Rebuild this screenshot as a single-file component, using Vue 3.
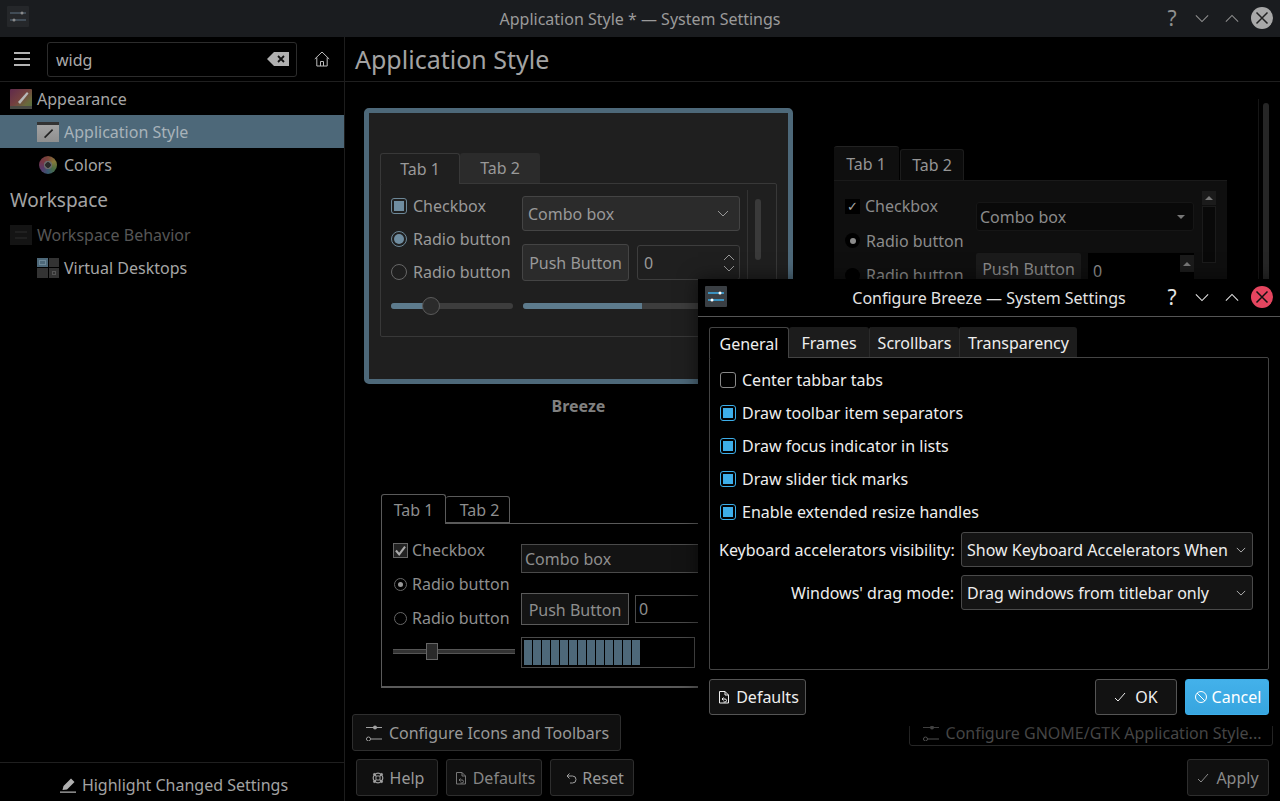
<script setup>
const checks = [
  { label: 'Center tabbar tabs', on: false },
  { label: 'Draw toolbar item separators', on: true },
  { label: 'Draw focus indicator in lists', on: true },
  { label: 'Draw slider tick marks', on: true },
  { label: 'Enable extended resize handles', on: true },
]
const chunks = Array.from({ length: 13 }, (_, i) => i)
const dialogTabs = ['General', 'Frames', 'Scrollbars', 'Transparency']
</script>

<template>
  <div class="app">
    <header class="titlebar">
      <svg class="app-icon dim-icon" viewBox="0 0 22 21"><rect width="22" height="21" rx="1" fill="#25272a"/><path d="M3 7h16M3 14h16" stroke="#4b5a65" stroke-width="1.5"/><circle cx="15" cy="7" r="1.5" fill="#8a8a8a"/><circle cx="7" cy="14" r="1.5" fill="#8a8a8a"/></svg>
      <div class="title">Application Style * — System Settings</div>
      <div class="win-btns">
        <span class="q">?</span>
        <svg class="chev" viewBox="0 0 16 10"><path d="M1 1.5l7 7 7-7" fill="none" stroke="currentColor" stroke-width="1.2"/></svg>
        <svg class="chev" viewBox="0 0 16 10"><path d="M1 8.5l7-7 7 7" fill="none" stroke="currentColor" stroke-width="1.2"/></svg>
        <span class="close-dot idle"><svg viewBox="0 0 22 22"><path d="M5.5 5.5l11 11M16.5 5.5l-11 11" stroke="#222" stroke-width="1.5"/></svg></span>
      </div>
    </header>

    <div class="body">
      <aside class="sidebar">
        <div class="side-head">
          <svg class="burger" viewBox="0 0 16 14"><path d="M0 1h16M0 7h16M0 13h16" stroke="#b4b4b4" stroke-width="2"/></svg>
          <div class="search">
            <span class="query">widg</span>
            <svg class="clear" viewBox="0 0 22 14"><path d="M7 0h15v14H7L0 7z" fill="#b0b0b0"/><path d="M11 4l6 6M17 4l-6 6" stroke="#111" stroke-width="1.8"/></svg>
          </div>
          <svg class="home" viewBox="0 0 16 16"><path d="M.8 8L8 1l7.2 7M2.8 6.5V15h10.4V6.5M6.5 15v-4.5h3V15" fill="none" stroke="#bdbdbd" stroke-width="1"/></svg>
        </div>
        <nav class="nav">
          <div class="row lvl1">
            <span class="ico ico-appearance"><svg viewBox="0 0 22 20"><path d="M8 13L17 3l1.500 1.500L10 15z" fill="#b8b8b8"/><path d="M0 17h22v3H0z" fill="#4a4a44"/></svg></span>Appearance
          </div>
          <div class="row lvl2 selected">
            <span class="ico ico-style"><svg viewBox="0 0 22 20"><path d="M7 15l8-8 1.200 1.200-8 8z" fill="#222"/></svg></span>Application Style
          </div>
          <div class="row lvl2">
            <span class="ico ico-colors"></span>Colors
          </div>
          <div class="heading">Workspace</div>
          <div class="row lvl1 disabled">
            <span class="ico ico-work"><svg viewBox="0 0 22 20"><path d="M5 7h12M5 13h12" stroke="#2c2c2c"/></svg></span>Workspace Behavior
          </div>
          <div class="row lvl2">
            <span class="ico ico-virtual"><i class="vd-a"></i><i></i><i></i><i class="vd-d"></i></span>Virtual Desktops
          </div>
        </nav>
        <div class="side-foot">
          <svg class="btn-ico" viewBox="0 0 16 16"><path d="M0 14.500h16v1.200H0zM2.500 13l1-4L11 1.500 14.500 5 7 12.500z" fill="#b0b0b0"/></svg>
          Highlight Changed Settings
        </div>
      </aside>

      <main class="main">
        <div class="main-head">Application Style</div>
        <div class="canvas">
          <div class="scrollline"></div>
          <div class="main-scroll"></div>

          <!-- Breeze preview -->
          <div class="frame">
            <div class="w1">
              <div class="tabs1">
                <div class="t1 on">Tab 1</div>
                <div class="t1 off">Tab 2</div>
              </div>
              <div class="pane1">
                <div class="col-l">
                  <div class="opt"><span class="b-check"><i></i></span>Checkbox</div>
                  <div class="opt"><span class="b-radio on"><i></i></span>Radio button</div>
                  <div class="opt"><span class="b-radio"></span>Radio button</div>
                  <div class="b-slider"><i class="fill"></i><i class="knob"></i></div>
                </div>
                <div class="col-r">
                  <div class="b-combo">Combo box
                    <svg viewBox="0 0 12 7"><path d="M1 1l5 5 5-5" fill="none" stroke="#999" stroke-width="1"/></svg>
                  </div>
                  <div class="b-row">
                    <div class="b-btn">Push Button</div>
                    <div class="b-spin">0
                      <span class="spin-arrows">
                        <svg viewBox="0 0 12 7"><path d="M1 6l5-5 5 5" fill="none" stroke="#999"/></svg>
                        <svg viewBox="0 0 12 7"><path d="M1 1l5 5 5-5" fill="none" stroke="#999"/></svg>
                      </span>
                    </div>
                  </div>
                  <div class="b-progress"><i></i></div>
                </div>
                <div class="col-s"><i></i></div>
              </div>
            </div>
          </div>
          <div class="caption">Breeze</div>

          <!-- right preview -->
          <div class="w2">
            <div class="tabs2">
              <div class="t2 on">Tab 1</div>
              <div class="t2 off">Tab 2</div>
            </div>
            <div class="pane2">
              <div class="col2-l">
                <div class="opt2"><span class="x-check">✓</span>Checkbox</div>
                <div class="opt2"><span class="x-radio on"><i></i></span>Radio button</div>
                <div class="opt2"><span class="x-radio"></span>Radio button</div>
              </div>
              <div class="col2-r">
                <div class="x-combo">Combo box<span class="tri"></span></div>
                <div class="x-row">
                  <div class="x-btn">Push Button</div>
                  <div class="x-spin">0<span class="x-spin-up"><span class="tri up"></span></span></div>
                </div>
              </div>
              <div class="col2-s">
                <span class="x-up"><span class="tri up"></span></span>
                <span class="x-trough"></span>
              </div>
            </div>
          </div>

          <!-- lower preview -->
          <div class="w3">
            <div class="tabs3">
              <div class="t3 on">Tab 1</div>
              <div class="t3 off">Tab 2</div>
            </div>
            <div class="pane3">
              <div class="col3-l">
                <div class="opt3"><span class="w-check"><svg viewBox="0 0 10 10"><path d="M1.500 5l2.500 3 4.500-6" fill="none" stroke="#aaa" stroke-width="1.600"/></svg></span>Checkbox</div>
                <div class="opt3"><span class="w-radio on"><i></i></span>Radio button</div>
                <div class="opt3"><span class="w-radio"></span>Radio button</div>
                <div class="w-slider"><i></i></div>
              </div>
              <div class="col3-r">
                <div class="w-combo">Combo box</div>
                <div class="w-row">
                  <div class="w-btn">Push Button</div>
                  <div class="w-spin">0</div>
                </div>
                <div class="w-progress"><i v-for="c in chunks" :key="c"></i></div>
              </div>
            </div>
          </div>
        </div>

        <div class="cfg-row">
          <div class="btn cfg">
            <svg class="btn-ico" viewBox="0 0 16 16"><path d="M0 2.500h16M0 14h16" stroke="#a0a0a0"/><circle cx="9" cy="2.500" r="2" fill="#a0a0a0"/><circle cx="2.500" cy="14" r="2" fill="#000" stroke="#a0a0a0"/></svg>
            Configure Icons and Toolbars
          </div>
          <div class="btn cfg gtk">
            <svg class="btn-ico" viewBox="0 0 16 16"><path d="M0 2.500h16M0 14h16" stroke="#555"/><circle cx="9" cy="2.500" r="2" fill="#555"/><circle cx="2.500" cy="14" r="2" fill="#000" stroke="#555"/></svg>
            Configure GNOME/GTK Application Style...
          </div>
        </div>
        <div class="foot-row">
          <div class="btn help">
            <svg class="btn-ico" viewBox="0 0 16 16"><circle cx="8" cy="8" r="4.800" fill="none" stroke="#a0a0a0" stroke-width="1.200"/><circle cx="8" cy="8" r="2.200" fill="none" stroke="#a0a0a0"/><path d="M3.500 3.500l2.500 2.500M12.500 3.500L10 6M3.500 12.500L6 10M12.500 12.500L10 10" stroke="#a0a0a0" stroke-width="2"/></svg>
            Help
          </div>
          <div class="btn defaults">
            <svg class="btn-ico" viewBox="0 0 16 16"><path d="M3.500 2.500h5.500l3.500 3.500v8h-9zM9 2.500V6h3.500" fill="none" stroke="#777"/><path d="M6 10h3a1.500 1.500 0 0 1 0 3H7.500M7.500 8.500L6 10l1.500 1.500" fill="none" stroke="#777"/></svg>
            Defaults
          </div>
          <div class="btn reset">
            <svg class="btn-ico" viewBox="0 0 16 16"><path d="M4 6h5.500a3.500 3.500 0 0 1 0 7H7M6.500 3.500L4 6l2.500 2.500" fill="none" stroke="#a0a0a0" stroke-width="1"/></svg>
            Reset
          </div>
          <div class="spacer"></div>
          <div class="btn apply">
            <svg class="btn-ico" viewBox="0 0 16 16"><path d="M3 9l3 3 7-8" fill="none" stroke="#8a8a8a" stroke-width="1"/></svg>
            Apply
          </div>
        </div>
      </main>
    </div>

    <!-- dialog -->
    <section class="dialog">
      <div class="dlg-title">
        <svg class="app-icon" viewBox="0 0 22 21"><rect width="22" height="21" rx="1" fill="#3a3f44"/><path d="M3 7h16M3 14h16" stroke="#3daee9" stroke-width="1.500"/><circle cx="15" cy="7" r="1.500" fill="#fff"/><circle cx="7" cy="14" r="1.500" fill="#fff"/></svg>
        <div class="dlg-name">Configure Breeze — System Settings</div>
        <div class="win-btns light">
          <span class="q">?</span>
          <svg class="chev" viewBox="0 0 16 10"><path d="M1 1.500l7 7 7-7" fill="none" stroke="currentColor" stroke-width="1.200"/></svg>
          <svg class="chev" viewBox="0 0 16 10"><path d="M1 8.500l7-7 7 7" fill="none" stroke="currentColor" stroke-width="1.200"/></svg>
          <span class="close-dot"><svg viewBox="0 0 22 22"><path d="M5.500 5.500l11 11M16.500 5.500l-11 11" stroke="#111" stroke-width="1.500"/></svg></span>
        </div>
      </div>
      <div class="dlg-body">
        <div class="dlg-tabs">
          <div v-for="(t, i) in dialogTabs" :key="t" class="dt" :class="{ active: i === 0 }">{{ t }}</div>
        </div>
        <div class="dlg-pane">
          <div v-for="c in checks" :key="c.label" class="chk-row">
            <span class="chk" :class="{ on: c.on }"><i></i></span>{{ c.label }}
          </div>
          <div class="form-row first">
            <label>Keyboard accelerators visibility:</label>
            <div class="combo">Show Keyboard Accelerators When
              <svg viewBox="0 0 12 7"><path d="M1 1l5 5 5-5" fill="none" stroke="#ccc"/></svg>
            </div>
          </div>
          <div class="form-row">
            <label>Windows' drag mode:</label>
            <div class="combo">Drag windows from titlebar only
              <svg viewBox="0 0 12 7"><path d="M1 1l5 5 5-5" fill="none" stroke="#ccc"/></svg>
            </div>
          </div>
        </div>
        <div class="dlg-foot">
          <div class="dbtn d-def">
            <svg class="btn-ico" viewBox="0 0 16 16"><path d="M3.500 2.500h5.500l3.500 3.500v8h-9zM9 2.500V6h3.500" fill="none" stroke="#eee"/><path d="M6 10h3a1.500 1.500 0 0 1 0 3H7.500M7.500 8.500L6 10l1.500 1.500" fill="none" stroke="#eee"/></svg>
            Defaults
          </div>
          <div class="spacer"></div>
          <div class="dbtn d-ok">
            <svg class="btn-ico" viewBox="0 0 16 16"><path d="M3 9l3 3 7-8" fill="none" stroke="#eee" stroke-width="1"/></svg>
            OK
          </div>
          <div class="dbtn d-cancel">
            <svg class="btn-ico" viewBox="0 0 16 16"><circle cx="8" cy="8" r="5.500" fill="none" stroke="#fff" stroke-width="1"/><path d="M4 4l8 8" stroke="#fff" stroke-width="1"/></svg>
            Cancel
          </div>
        </div>
      </div>
    </section>
  </div>
</template>

<style>
html, body { margin: 0; background: #000; }
</style>

<style scoped>
.app {
  position: relative; width: 1280px; height: 801px; overflow: hidden;
  display: flex; flex-direction: column; background: #000;
  font: 16px/22px "Noto Sans", sans-serif; color: #a3a3a3;
}
.spacer { flex: 1; }
.titlebar { height: 37px; flex: none; background: #1a1c1f; position: relative; display: flex; align-items: center; justify-content: center; }
.app-icon { position: absolute; left: 7px; top: 7px; width: 22px; height: 21px; }
.dim-icon { top: 6px; }
.title { color: #9a9a9a; margin-top: 1px; }
.win-btns { position: absolute; left: 1164px; top: 7px; display: flex; align-items: center; height: 22px; color: #8f8f8f; }
.q { width: 16px; text-align: center; font-size: 21px; line-height: 22px; }
.chev { width: 14px; height: 9px; margin-left: 15px; }
.chev + .chev { margin-left: 16px; }
.close-dot { width: 22px; height: 22px; border-radius: 50%; background: #e5455f; margin-left: 12px; display: block; }
.close-dot svg { display: block; width: 22px; height: 22px; }
.close-dot.idle { background: #a8a8a8; }

.body { flex: 1; display: flex; min-height: 0; }
.sidebar { width: 344px; border-right: 1px solid #1d1d1d; display: flex; flex-direction: column; flex: none; }
.side-head { height: 44px; flex: none; border-bottom: 1px solid #1f1f1f; display: flex; align-items: center; padding-left: 14px; }
.burger { width: 16px; height: 14px; }
.search { margin-left: 17px; width: 250px; height: 35px; box-sizing: border-box; border: 1px solid #2c2c2c; border-radius: 3px; display: flex; align-items: center; justify-content: space-between; padding: 0 7px 0 8px; color: #aaa; }
.query { margin-top: 2px; }
.clear { width: 22px; height: 14px; }
.home { width: 16px; height: 16px; margin-left: 17px; }
.nav { flex: 1; }
.row { height: 33px; display: flex; align-items: center; color: #a6a6a6; }
.lvl1 { padding-left: 10px; }
.lvl2 { padding-left: 37px; }
.row .ico { width: 22px; height: 20px; margin-right: 5px; flex: none; display: block; position: relative; }
.ico svg { display: block; width: 22px; height: 20px; }
.selected { background: #4d6879; color: #a8b3ba; }
.disabled { color: #565656; }
.ico-appearance { background: linear-gradient(135deg, #5f2a4c 0%, #74403f 45%, #6a6a3c 75%, #4d6f40 100%); border-radius: 1px; }
.ico-style { background: linear-gradient(#333 0 3px, #a3a3a3 3px, #8f8f8f 100%); }
.ico-colors { background: radial-gradient(circle, #2a2a2a 0 2.500px, #6a6a6a 3px 4px, transparent 4.500px), conic-gradient(#7a4538, #87793a, #4d6f40, #375a72, #5a3868, #763545, #7a4538); border-radius: 50%; width: 18px !important; height: 18px !important; margin: 0 7px 0 2px !important; }
.ico-work { background: #141414; }
.ico-virtual { display: grid !important; grid-template-columns: 1fr 1fr; grid-template-rows: 1fr 1fr; gap: 1px; }
.ico-virtual i { background: #333; }
.ico-virtual .vd-a { background: #4d6879; box-shadow: inset 0 0 0 2px #4d6879, inset 0 0 0 3px #6d8898; }
.ico-virtual .vd-d { box-shadow: inset 0 0 0 3px #333, inset 0 0 0 4px #555; }
.heading { height: 37px; display: flex; align-items: center; padding-left: 10px; font-size: 19px; color: #a3a3a3; }
.side-foot { height: 39px; flex: none; box-sizing: border-box; border-top: 1px solid #1f1f1f; display: flex; align-items: center; justify-content: center; color: #a3a3a3; gap: 6px; padding: 6px 0 0 4px; }
.btn-ico { width: 16px; height: 16px; flex: none; }

.main { flex: 1; display: flex; flex-direction: column; min-width: 0; }
.main-head { height: 44px; flex: none; border-bottom: 1px solid #1f1f1f; padding-left: 10px; font-size: 25px; line-height: 44px; color: #a3a3a3; }
.canvas { flex: 1; position: relative; min-height: 0; }
.scrollline { position: absolute; left: 913px; top: 17px; width: 1px; height: 620px; background: #161616; }
.main-scroll { position: absolute; left: 918px; top: 21px; width: 6px; height: 400px; border-radius: 3px; background: #262626; }

/* Breeze preview */
.frame { position: absolute; left: 19px; top: 26px; width: 429px; height: 276px; box-sizing: border-box; border: 5px solid #4d6879; border-radius: 5px; background: #1f1f1f; }
.w1 { position: absolute; left: 11px; top: 40px; width: 397px; }
.tabs1 { display: flex; height: 31px; position: relative; z-index: 1; }
.t1 { width: 80px; display: flex; align-items: center; justify-content: center; box-sizing: border-box; color: #999; }
.t1.on { height: 31px; border: 1px solid #383838; border-bottom: 0; background: #1f1f1f; border-radius: 3px 3px 0 0; }
.t1.off { height: 30px; background: #2b2b2b; border-radius: 3px 3px 0 0; width: 80px; }
.pane1 { margin-top: -1px; height: 154px; box-sizing: border-box; border: 1px solid #383838; border-radius: 2px; display: flex; padding-left: 10px; position: relative; }
.col-l { width: 122px; padding-top: 5px; }
.opt { height: 33px; display: flex; align-items: center; color: #999; white-space: nowrap; }
.b-check { width: 16px; height: 16px; box-sizing: border-box; border: 1px solid #6d8898; border-radius: 3px; margin-right: 6px; padding: 2px; flex: none; }
.b-check i { display: block; width: 10px; height: 10px; background: #6f8da0; }
.b-radio { width: 16px; height: 16px; box-sizing: border-box; border: 1px solid #666; border-radius: 50%; margin-right: 6px; padding: 2px; flex: none; }
.b-radio.on { border-color: #6d8898; }
.b-radio i { display: block; width: 10px; height: 10px; border-radius: 50%; background: #6f8da0; }
.b-slider { position: relative; height: 6px; margin-top: 15px; border-radius: 3px; background: #3d3d3d; }
.b-slider .fill { position: absolute; left: 0; top: 0; bottom: 0; width: 40px; background: #5d7b8d; border-radius: 3px 0 0 3px; }
.b-slider .knob { position: absolute; left: 31px; top: -6px; width: 18px; height: 18px; box-sizing: border-box; border: 1px solid #5a5a5a; border-radius: 50%; background: #2b2b2b; }
.col-r { width: 218px; margin-left: 9px; padding-top: 12px; }
.b-combo { height: 35px; box-sizing: border-box; border: 1px solid #444; border-radius: 3px; background: #2b2b2b; display: flex; align-items: center; justify-content: space-between; padding: 0 10px 0 5px; color: #999; }
.b-combo svg { width: 12px; height: 7px; }
.b-row { display: flex; margin-top: 13px; align-items: center; }
.b-btn { width: 107px; height: 37px; box-sizing: border-box; border: 1px solid #444; border-radius: 3px; background: #2b2b2b; display: flex; align-items: center; justify-content: center; color: #999; }
.b-spin { width: 103px; height: 35px; margin-left: 8px; box-sizing: border-box; border: 1px solid #3d3d3d; border-radius: 3px; display: flex; align-items: center; justify-content: space-between; padding: 0 4px 0 6px; color: #999; }
.spin-arrows { display: flex; flex-direction: column; gap: 4px; }
.spin-arrows svg { display: block; width: 12px; height: 7px; }
.b-progress { margin-top: 22px; margin-left: 1px; width: 180px; height: 6px; background: #3d3d3d; border-radius: 3px; overflow: hidden; }
.b-progress i { display: block; width: 119px; height: 6px; background: #5d7b8d; }
.col-s { margin: 6px 0 0 7px; height: 100px; width: 8px; border-left: 1px solid #333; padding-left: 7px; }
.col-s i { display: block; width: 6px; height: 61px; margin-top: 9px; border-radius: 3px; background: #3a3a3a; }
.caption { position: absolute; left: 19px; width: 429px; top: 313px; text-align: center; font-weight: 700; font-size: 16px; color: #808080; }

/* right preview */
.w2 { position: absolute; left: 489px; top: 64px; width: 393px; }
.tabs2 { display: flex; align-items: flex-end; height: 34px; }
.t2 { box-sizing: border-box; display: flex; align-items: center; justify-content: center; color: #959595; border-radius: 3px 3px 0 0; }
.t2.on { width: 65px; height: 34px; background: #0f0f0f; position: relative; z-index: 1; border-top: 1px solid #222; padding-right: 1px; }
.t2.off { width: 64px; height: 31px; margin-left: 1px; background: #0c0c0c; border: 1px solid #1c1c1c; border-bottom: 0; }
.pane2 { height: 110px; background: #0f0f0f; display: flex; position: relative; overflow: hidden; border-top: 1px solid #1a1a1a; box-sizing: border-box; }
.col2-l { width: 131px; padding: 8px 0 0 11px; }
.opt2 { height: 34.500px; display: flex; align-items: center; color: #8b8b8b; white-space: nowrap; }
.x-check { width: 15px; height: 15px; background: #000; margin-right: 5px; color: #aaa; font-size: 13px; line-height: 15px; text-align: center; flex: none; }
.x-radio { width: 15px; height: 15px; border-radius: 50%; background: #000; margin-right: 6px; flex: none; display: flex; align-items: center; justify-content: center; }
.x-radio i { width: 6px; height: 6px; border-radius: 50%; background: #8b8b8b; }
.col2-r { width: 218px; padding-top: 21px; }
.x-combo { height: 29px; border-radius: 3px; background: #090909; border: 1px solid #161616; box-sizing: border-box; display: flex; align-items: center; justify-content: space-between; padding: 0 8px 0 3px; color: #8b8b8b; }
.tri { display: block; width: 0; height: 0; border: 4px solid transparent; border-top: 4px solid #777; border-bottom: 0; }
.tri.up { border-top: 0; border-bottom: 4px solid #777; }
.x-row { display: flex; margin-top: 22px; }
.x-btn { width: 105px; height: 36px; background: #1b1b1b; border-radius: 2px; display: flex; align-items: center; justify-content: center; color: #8b8b8b; padding-bottom: 4px; box-sizing: border-box; }
.x-spin { width: 106px; height: 36px; margin-left: 7px; background: #000; padding-left: 5px; box-sizing: border-box; display: flex; align-items: center; justify-content: space-between; color: #8b8b8b; padding-bottom: 1px; }
.x-spin-up { width: 14px; height: 17px; background: #1b1b1b; display: flex; align-items: center; justify-content: center; align-self: flex-start; margin-top: 2px; }
.col2-s { margin: 10px 0 0 8px; width: 14px; display: flex; flex-direction: column; gap: 1px; }
.x-up { height: 14px; flex: none; background: #1b1b1b; display: flex; align-items: center; justify-content: center; }
.x-trough { height: 57px; flex: none; background: #090909; border: 1px solid #1b1b1b; box-sizing: border-box; }

/* lower preview */
.w3 { position: absolute; left: 36px; top: 412px; width: 330px; }
.tabs3 { display: flex; align-items: flex-end; height: 29px; position: relative; z-index: 1; }
.t3 { box-sizing: border-box; display: flex; align-items: center; justify-content: center; color: #8e8e8e; border: 1px solid #5a5a5a; border-radius: 3px 3px 0 0; background: #000; }
.t3.on { width: 65px; height: 30px; border-bottom: 0; margin-bottom: -1px; }
.t3.off { width: 64px; height: 27px; border-left: 0; padding-left: 4px; }
.pane3 { height: 165px; box-sizing: border-box; border-top: 1px solid #5a5a5a; border-left: 1px solid #5a5a5a; border-bottom: 2px solid #5a5a5a; display: flex; }
.col3-l { width: 126px; padding: 9px 0 0 11px; flex: none; }
.opt3 { height: 34px; display: flex; align-items: center; color: #8e8e8e; white-space: nowrap; }
.w-check { width: 13px; height: 13px; border: 1px solid #666; background: #222; margin-right: 4px; flex: none; display: block; }
.w-check svg { display: block; width: 13px; height: 13px; }
.w-radio { width: 11px; height: 11px; border: 1px solid #666; border-radius: 50%; margin: 0 5px 0 1px; flex: none; display: flex; align-items: center; justify-content: center; }
.w-radio i { width: 5px; height: 5px; border-radius: 50%; background: #999; }
.w-slider { position: relative; height: 3px; width: 122px; margin-top: 14px; background: #333; border-top: 1px solid #555; border-bottom: 1px solid #555; }
.w-slider i { position: absolute; left: 33px; top: -7px; width: 12px; height: 17px; box-sizing: border-box; background: #2a2a2a; border: 1px solid #666; }
.col3-r { padding-top: 20px; margin-left: 2px; flex: 1; min-width: 0; }
.w-combo { height: 29px; border: 1px solid #4a4a4a; border-right: 0; background: #131313; box-sizing: border-box; display: flex; align-items: center; padding-left: 3px; color: #8e8e8e; }
.w-row { display: flex; margin-top: 20px; align-items: center; }
.w-btn { width: 108px; height: 32px; border: 1px solid #5a5a5a; background: #141414; box-sizing: border-box; display: flex; align-items: center; justify-content: center; color: #8e8e8e; flex: none; padding-top: 1px; }
.w-spin { flex: 1; height: 28px; margin-left: 6px; border: 1px solid #4a4a4a; border-right: 0; box-sizing: border-box; display: flex; align-items: center; padding-left: 3px; color: #8e8e8e; }
.w-progress { margin-top: 12px; width: 174px; height: 31px; box-sizing: border-box; border: 1px solid #4a4a4a; display: flex; gap: 1.200px; padding: 2px; }
.w-progress i { width: 7.800px; background: #4d6879; flex: none; }

.btn { height: 37px; box-sizing: border-box; border: 1px solid #2e2e2e; border-radius: 3px; background: #101010; display: flex; align-items: center; justify-content: center; gap: 4px; color: #999; white-space: nowrap; }
.cfg-row { height: 37px; flex: none; display: flex; justify-content: space-between; padding: 0 7px; margin-bottom: 8px; }
.cfg { width: 269px; gap: 7px; padding-left: 2px; }
.gtk { width: 364px; color: #4e4e4e; border-color: #272727; background: #000; position: relative; top: -5px; padding-top: 11px; }
.foot-row { height: 37px; flex: none; display: flex; gap: 8px; padding: 0 11px; margin-bottom: 5px; }
.help { width: 82px; }
.defaults { width: 96px; color: #858585; }
.reset { width: 84px; padding-left: 3px; gap: 3px; }
.apply { width: 82px; color: #8a8a8a; gap: 5px; padding-right: 2px; }

/* dialog */
.dialog { position: absolute; left: 698px; top: 279px; width: 582px; height: 447px; background: #000; box-shadow: 0 0 18px rgba(0,0,0,.55); display: flex; flex-direction: column; color: #eee; }
.dlg-title { height: 37px; flex: none; border-bottom: 1px solid #555; position: relative; display: flex; align-items: center; }
.dlg-name { position: absolute; left: 0; right: 0; text-align: center; color: #e4e4e4; }
.win-btns.light { left: 466px; color: #e4e4e4; }
.dlg-body { flex: 1; padding: 10px 11px 0; }
.dlg-tabs { display: flex; height: 31px; position: relative; z-index: 1; }
.dt { box-sizing: border-box; display: flex; align-items: center; justify-content: center; background: #1c1c1c; border-left: 1px solid #2a2a2a; height: 30px; padding-top: 2px; color: #eee; border-radius: 3px 3px 0 0; }
.dt:nth-child(1) { width: 80px; }
.dt:nth-child(2) { width: 80px; border-left: 0; }
.dt:nth-child(3) { width: 90px; }
.dt:nth-child(4) { width: 118px; }
.dt.active { height: 31px; background: #000; border: 1px solid #444; border-bottom: 0; }
.dlg-pane { margin-top: -1px; height: 313px; box-sizing: border-box; border: 1px solid #444; border-radius: 2px; padding: 5px 15px 0 10px; }
.chk-row { height: 33px; display: flex; align-items: center; white-space: nowrap; }
.chk { width: 16px; height: 16px; box-sizing: border-box; border: 1px solid #888; border-radius: 3px; margin-right: 6px; flex: none; padding: 2px; }
.chk.on { border-color: #3daee9; }
.chk.on i { display: block; width: 10px; height: 10px; background: #3daee9; }
.form-row { display: flex; align-items: center; height: 35px; margin-top: 8px; }
.form-row.first { margin-top: 4px; }
.form-row label { width: 235px; margin-left: -1px; text-align: right; margin-right: 7px; white-space: nowrap; flex: none; }
.combo { width: 292px; height: 35px; box-sizing: border-box; border: 1px solid #4a4a4a; border-radius: 3px; background: #141414; display: flex; align-items: center; justify-content: space-between; padding: 0 6px 0 5px; }
.combo svg { width: 10px; height: 6px; flex: none; }
.dlg-foot { display: flex; margin-top: 9px; gap: 8px; }
.dbtn { height: 36px; box-sizing: border-box; border: 1px solid #555; border-radius: 3px; background: #121212; display: flex; align-items: center; justify-content: center; gap: 7px; color: #eee; }
.d-def { width: 97px; gap: 4px; }
.d-ok { width: 82px; padding-right: 2px; }
.d-cancel { width: 84px; background: linear-gradient(#43b1ea, #37a5df); border-color: #3daee9; color: #fff; gap: 3px; }
</style>
